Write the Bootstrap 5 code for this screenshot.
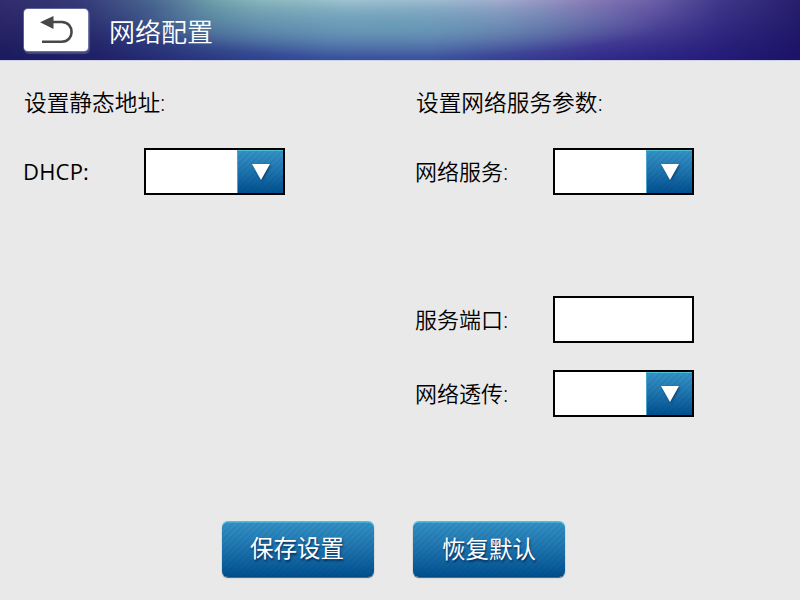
<!DOCTYPE html>
<html lang="zh-CN">
<head>
<meta charset="utf-8">
<meta name="viewport" content="width=device-width, initial-scale=1">
<title>网络配置</title>
<link href="https://cdn.jsdelivr.net/npm/bootstrap@5.3.0/dist/css/bootstrap.min.css" rel="stylesheet">
<style>
  body { width: 800px; height: 600px; background: #e9e9e9; color: #000; overflow: hidden;
    font-family: "Open Sans", "Noto Sans CJK SC", sans-serif; font-weight: 350; line-height: 1; }
  .top-bar { height: 60px; padding-left: 24px; isolation: isolate;
    background: linear-gradient(90deg, #1c1b60 0, #1f2068 100px, #2c3e8b 240px, #36509c 330px, #3a529d 430px, #354192 500px, #30298a 600px, #261e7c 700px, #1c1268 800px);
    box-shadow: inset 0 1px rgba(255,255,255,.15), 0 1px #cfd1e4; }
  .top-bar::before, .top-bar::after { content: ""; position: absolute; inset: 0; z-index: -1; }
  .top-bar::before { background: linear-gradient(90deg, #332c6c 0, #353a78 80px, #49668f 150px, #70a2ab 215px, #8bb9bc 260px, #a9cad5 350px, #a8c2d5 420px, #a9add0 500px, #8b82b9 580px, #6d61a9 650px, #40378a 720px, #271f6b 800px);
    -webkit-mask-image: linear-gradient(#000, rgba(0,0,0,.76) 25%, rgba(0,0,0,.48) 50%, rgba(0,0,0,.2) 75%, transparent);
    mask-image: linear-gradient(#000, rgba(0,0,0,.76) 25%, rgba(0,0,0,.48) 50%, rgba(0,0,0,.2) 75%, transparent); }
  .top-bar::after { background: radial-gradient(ellipse 270px 32px at 390px 25px, rgba(98,160,180,.68), rgba(98,160,180,.4) 45%, rgba(98,160,180,0)); }
  .back-btn { width: 64px; height: 42px; border-radius: 4px; background: #fff; margin-bottom: 1px;
    box-shadow: 0 0 0 1px rgba(190,200,230,.35), 1px 2px 1px 1px rgba(120,125,165,.45); }
  .page-title { font-size: 26px; margin-left: 21px; font-weight: 350; padding-top: 4px; line-height: 1; }
  .settings { padding: 28px 0 0 24px; }
  .settings-col { width: 392px; flex: none; }
  .section-title { font-size: 22.7px; height: 31px; margin-bottom: 29px; padding-bottom: 1px; font-weight: 350; white-space: nowrap; }
  .setting-row { height: 47px; margin-bottom: 27px; font-size: 22px; }
  .setting-label { width: 138px; margin-left: -1px; padding-bottom: 2px; }
  .dhcp-label { width: 121px; font-weight: 400; letter-spacing: .2px; }
  .value-box { width: 141px; height: 47px; border: 2px solid #000; background: #fff; }
  .blue-face { background:
      repeating-linear-gradient(135deg, rgba(0,50,105,.09) 0 1.2px, rgba(255,255,255,0) 2.2px 3.4px, rgba(0,50,105,.09) 4.4px),
      linear-gradient(#3594c6, #2077b0 45%, #00508f); }
  .drop-face { width: 46px; border-top: 1px solid #4cc0d8; border-left: 1px solid #4aa5cc; }
  .drop-face svg { filter: drop-shadow(1px 1px 1px rgba(0,30,70,.6)); }
  .action-btn { width: 152px; height: 56px; padding: 0 2px 2px 0; border: 0; border-radius: 6px; color: #fff; font-size: 23.5px;
    font-family: "Noto Sans CJK SC", sans-serif; font-weight: 400; line-height: 1; text-shadow: 1px 2px 2px rgba(0,30,70,.75);
    box-shadow: inset 0 1.5px #51c0da, inset 0 -1px #004a84, 0 1px 1px rgba(40,40,50,.75); }
  .reset-btn { padding: 0; }
  .footer-actions { padding: 104px 0 0 222px; gap: 39px; }
</style>
</head>
<body>
<header class="top-bar d-flex align-items-center position-relative text-white">
  <button class="back-btn border-0 p-0 d-flex" type="button" aria-label="返回">
    <svg width="64" height="42" viewBox="24 9 64 42"><path d="M52 22h9.8c13 0 13 19.8 0 19.8H42" fill="none" stroke="#484848" stroke-width="2.6"/><path d="M40 22.2 53.5 16v13z" fill="#484848"/></svg>
  </button>
  <h1 class="page-title mb-0">网络配置</h1>
</header>
<main>
  <div class="settings d-flex">
    <section class="settings-col">
      <h2 class="section-title d-flex align-items-center">设置静态地址:</h2>
      <div class="setting-row d-flex align-items-center">
        <label class="setting-label dhcp-label">DHCP:</label>
        <div class="value-box d-flex justify-content-end"><span class="drop-face blue-face d-flex align-items-center justify-content-center"><svg width="18" height="16"><path d="M0 0h18L9 16z" fill="#fff"/></svg></span></div>
      </div>
    </section>
    <section class="settings-col">
      <h2 class="section-title d-flex align-items-center">设置网络服务参数:</h2>
      <div class="setting-row d-flex align-items-center">
        <label class="setting-label">网络服务:</label>
        <div class="value-box d-flex justify-content-end"><span class="drop-face blue-face d-flex align-items-center justify-content-center"><svg width="18" height="16"><path d="M0 0h18L9 16z" fill="#fff"/></svg></span></div>
      </div>
      <div class="setting-row"></div>
      <div class="setting-row d-flex align-items-center">
        <label class="setting-label">服务端口:</label>
        <div class="value-box"></div>
      </div>
      <div class="setting-row mb-0 d-flex align-items-center">
        <label class="setting-label">网络透传:</label>
        <div class="value-box d-flex justify-content-end"><span class="drop-face blue-face d-flex align-items-center justify-content-center"><svg width="18" height="16"><path d="M0 0h18L9 16z" fill="#fff"/></svg></span></div>
      </div>
    </section>
  </div>
  <div class="footer-actions d-flex">
    <button class="action-btn blue-face" type="button">保存设置</button>
    <button class="action-btn reset-btn blue-face" type="button">恢复默认</button>
  </div>
</main>
<script src="https://cdn.jsdelivr.net/npm/bootstrap@5.3.0/dist/js/bootstrap.bundle.min.js"></script>
</body>
</html>
